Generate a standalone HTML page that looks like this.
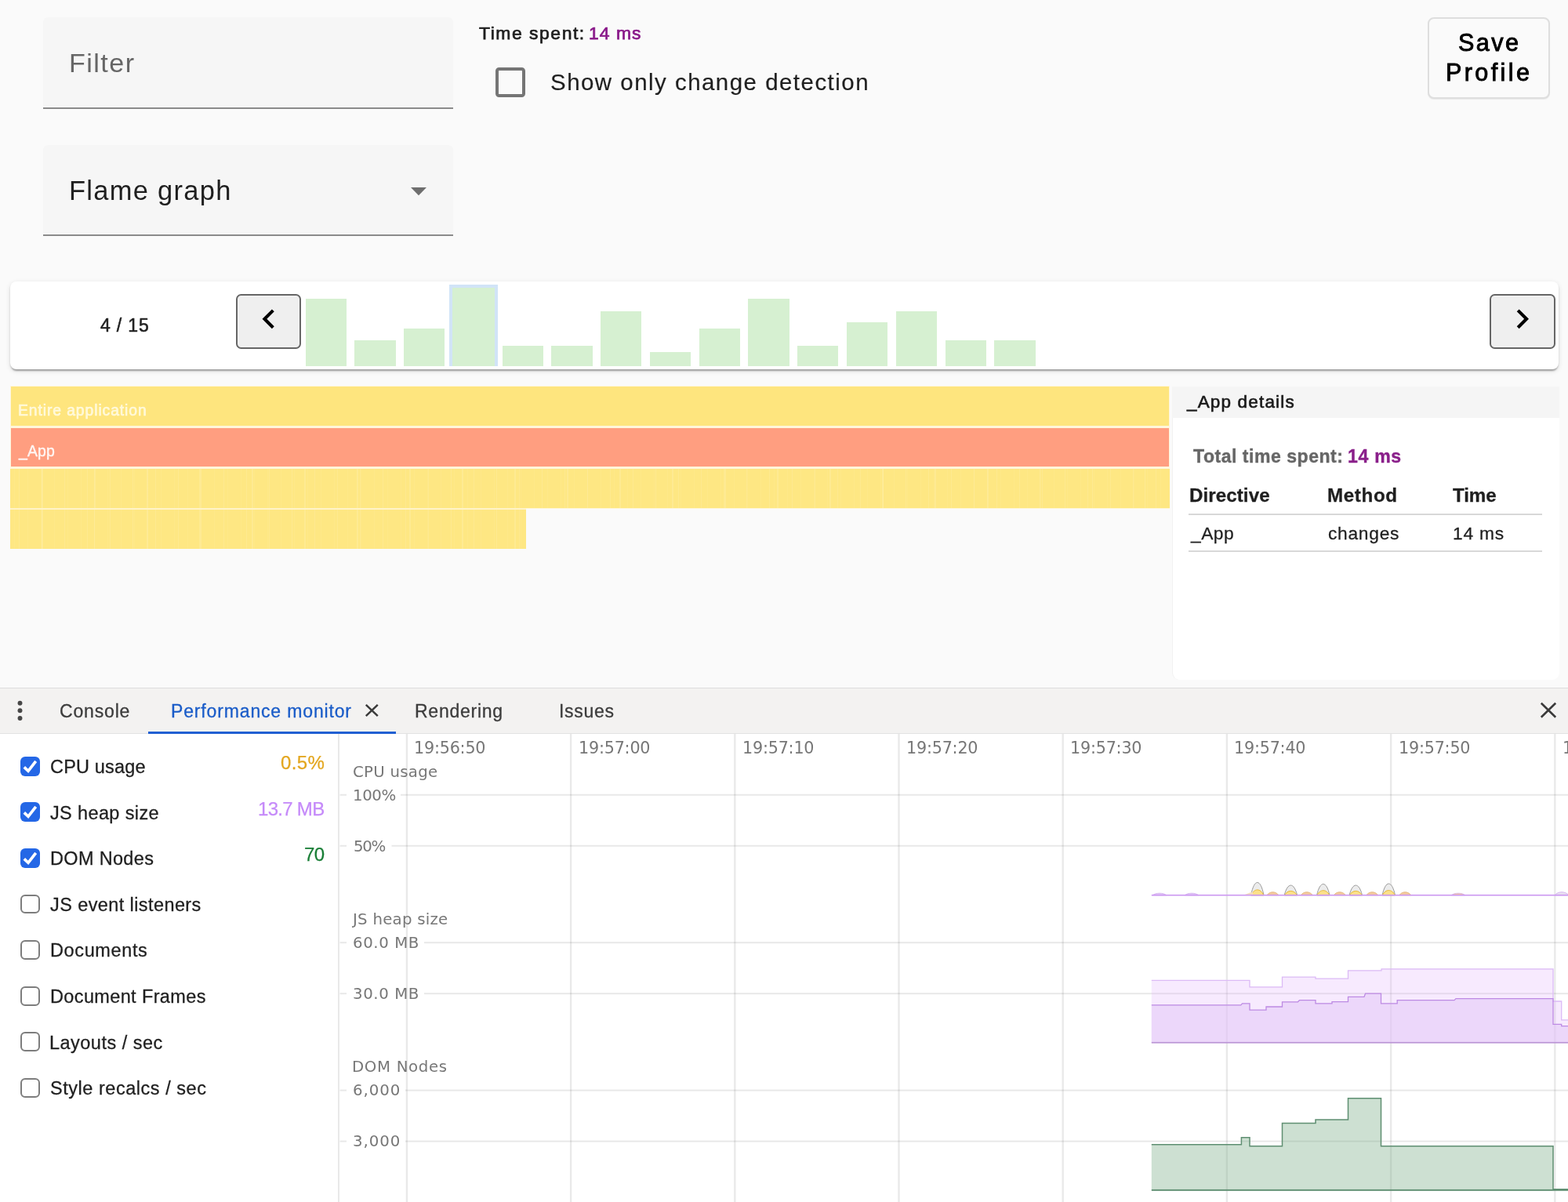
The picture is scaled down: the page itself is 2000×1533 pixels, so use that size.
<!DOCTYPE html>
<html lang="en"><head><meta charset="utf-8"><title>Angular DevTools Profiler</title>
<style>
*{box-sizing:border-box;margin:0;padding:0}
html,body{width:2000px;height:1533px;overflow:hidden;background:#fafafa}
body{position:relative;font-family:"Liberation Sans",sans-serif;-webkit-font-smoothing:antialiased}
.t{position:absolute;white-space:nowrap;will-change:transform}
.a{position:absolute}
.field{background:#f6f6f6;border-radius:6px 6px 0 0;border-bottom:2px solid #8b8b8b}
.card{background:#fff;border-radius:8px;box-shadow:0 4px 2px -2px rgba(0,0,0,.2),0 2px 2px rgba(0,0,0,.14),0 2px 6px rgba(0,0,0,.12)}
.nav{background:#efefef;border:2px solid #666;border-radius:6.5px}
.bar{background:#d6f0d1}
.fy{background:#fee57e}
.fo{background:#ff9e80}
.st{background-color:#fee783;background-image:repeating-linear-gradient(90deg,rgba(255,255,255,0) 0 11px,rgba(255,255,255,.10) 11px 12px,rgba(255,255,255,0) 12px 29px),repeating-linear-gradient(90deg,rgba(255,255,255,0) 0 40px,rgba(255,255,255,.12) 40px 41.5px,rgba(255,255,255,0) 41.5px 67px),repeating-linear-gradient(90deg,rgba(255,255,255,0) 0 5px,rgba(255,255,255,.05) 5px 6px,rgba(255,255,255,0) 6px 17px)}
.cb{border:2px solid #7d7d7d;border-radius:6px;background:#fff}
.cb.on{border:none;background:#2467e6}
svg{position:absolute;overflow:visible}
</style></head><body>

<main class="a" style="left:0;top:0;width:2000px;height:877px">
<div class="a field" style="left:55px;top:22px;width:523px;height:116.5px"></div>
<div class="t" style="left:88.08px;top:58.02px;font-size:34.13px;line-height:44px;letter-spacing:1.447px;color:#666;">Filter</div>
<div class="a field" style="left:55px;top:184.5px;width:523px;height:116.5px"></div>
<div class="t" style="left:88.06px;top:221.00px;font-size:34.49px;line-height:45px;letter-spacing:1.277px;color:#1f1f1f;">Flame graph</div>
<svg style="left:524px;top:239px" width="20" height="10.3" viewBox="0 0 20 10.3"><path d="M0 0h20L10 10.3z" fill="#6e6e6e"/></svg>
<div class="t" style="left:610.84px;top:27.00px;font-size:22.90px;line-height:30px;letter-spacing:1.546px;color:#1f1f1f;-webkit-text-stroke:0.75px currentColor;">Time spent:</div>
<div class="t" style="left:750.97px;top:27.00px;font-size:22.90px;line-height:30px;letter-spacing:1.048px;color:#8a1a8a;-webkit-text-stroke:0.75px currentColor;">14 ms</div>
<div class="a" style="left:632.2px;top:86.3px;width:37.8px;height:37.6px;border:4px solid #757575;border-radius:4.5px"></div>
<div class="t" style="left:702.38px;top:86.00px;font-size:29.44px;line-height:38px;letter-spacing:1.493px;color:#1f1f1f;-webkit-text-stroke:0.2px currentColor;">Show only change detection</div>
<div class="a" style="left:1821px;top:21.7px;width:156px;height:104px;border:2px solid #dedede;border-radius:8px;background:#fafafa;box-shadow:0 1px 1px rgba(0,0,0,.07)"></div>
<div class="t" style="left:1859.54px;top:34.01px;font-size:30.60px;line-height:40px;letter-spacing:2.417px;color:#000;-webkit-text-stroke:0.9px currentColor;">Save</div>
<div class="t" style="left:1843.91px;top:72.01px;font-size:30.60px;line-height:40px;letter-spacing:3.366px;color:#000;-webkit-text-stroke:0.9px currentColor;">Profile</div>
<div class="a card" style="left:13px;top:358.5px;width:1975px;height:112px"></div>
<div class="t" style="left:128.39px;top:400.00px;font-size:23.04px;line-height:30px;letter-spacing:0.830px;color:#1f1f1f;-webkit-text-stroke:0.55px currentColor;">4 / 15</div>
<div class="a nav" style="left:301.2px;top:375.4px;width:82.6px;height:69.2px"></div>
<svg style="left:318px;top:381.5px" width="49.5" height="49.5" viewBox="0 0 24 24"><path d="M15.41 7.41L14 6l-6 6 6 6 1.41-1.41L10.83 12z" fill="#000"/></svg>
<div class="a nav" style="left:1900.2px;top:375.4px;width:83.8px;height:69.2px"></div>
<svg style="left:1917px;top:381.5px" width="49.5" height="49.5" viewBox="0 0 24 24"><path d="M10 6L8.59 7.41 13.17 12l-4.58 4.59L10 18l6-6z" fill="#000"/></svg>
<div class="a bar" style="left:389.50px;top:381.25px;width:52.3px;height:85.50px"></div>
<div class="a bar" style="left:452.27px;top:433.75px;width:52.3px;height:33.00px"></div>
<div class="a bar" style="left:515.04px;top:419.25px;width:52.3px;height:47.50px"></div>
<div class="a" style="left:572.8px;top:362.5px;width:62.4px;height:104.25px;background:#d1e4f7"></div>
<div class="a bar" style="left:576.6px;top:367px;width:54.8px;height:99.75px"></div>
<div class="a bar" style="left:640.58px;top:440.75px;width:52.3px;height:26.00px"></div>
<div class="a bar" style="left:703.35px;top:440.75px;width:52.3px;height:26.00px"></div>
<div class="a bar" style="left:766.12px;top:396.75px;width:52.3px;height:70.00px"></div>
<div class="a bar" style="left:828.89px;top:449.25px;width:52.3px;height:17.50px"></div>
<div class="a bar" style="left:891.66px;top:419.25px;width:52.3px;height:47.50px"></div>
<div class="a bar" style="left:954.43px;top:381.25px;width:52.3px;height:85.50px"></div>
<div class="a bar" style="left:1017.20px;top:440.75px;width:52.3px;height:26.00px"></div>
<div class="a bar" style="left:1079.97px;top:411.25px;width:52.3px;height:55.50px"></div>
<div class="a bar" style="left:1142.74px;top:396.75px;width:52.3px;height:70.00px"></div>
<div class="a bar" style="left:1205.51px;top:433.75px;width:52.3px;height:33.00px"></div>
<div class="a bar" style="left:1268.28px;top:433.75px;width:52.3px;height:33.00px"></div>
<div class="a" style="left:13px;top:492px;width:1479.4px;height:157px;background:#fff6da"></div>
<div class="a" style="left:13px;top:640px;width:658px;height:20px;background:#fff3c8"></div>
<div class="a fy" style="left:14px;top:493.3px;width:1476.8px;height:49.9px"></div>
<div class="a fo" style="left:14px;top:545.9px;width:1476.8px;height:49.3px"></div>
<div class="a fy st" style="left:13px;top:598px;width:1478.6px;height:50px"></div>
<div class="a fy st" style="left:13px;top:649.8px;width:658.3px;height:50.6px"></div>
<div class="t" style="left:22.79px;top:511.00px;font-size:19.34px;line-height:25px;letter-spacing:0.907px;color:rgba(255,253,235,.78);-webkit-text-stroke:0.7px currentColor;">Entire application</div>
<div class="t" style="left:23.90px;top:563.00px;font-size:19.48px;line-height:25px;letter-spacing:0.127px;color:rgba(255,255,255,.88);-webkit-text-stroke:0.4px currentColor;">_App</div>
<div class="a" style="left:1494.5px;top:492.6px;width:494px;height:374px;background:#fff;border-radius:0 0 9px 9px;border-left:1.2px solid #f1f1f1"></div>
<div class="a" style="left:1494.5px;top:492.6px;width:494px;height:40.8px;background:#f5f5f5"></div>
<div class="t" style="left:1514.35px;top:498.01px;font-size:22.47px;line-height:29px;letter-spacing:1.179px;color:#1a1a1a;-webkit-text-stroke:0.65px currentColor;">_App details</div>
<div class="t" style="left:1522.40px;top:567.00px;font-size:23.04px;line-height:30px;letter-spacing:0.524px;color:#666;font-weight:700;-webkit-text-stroke:0.4px currentColor;">Total time spent:</div>
<div class="t" style="left:1719.16px;top:567.00px;font-size:23.04px;line-height:30px;letter-spacing:0.711px;color:#8a1f8a;font-weight:700;-webkit-text-stroke:0.4px currentColor;">14 ms</div>
<div class="t" style="left:1516.99px;top:616.01px;font-size:24.18px;line-height:31px;letter-spacing:0.059px;color:#1f1f1f;font-weight:700;-webkit-text-stroke:0.3px currentColor;">Directive</div>
<div class="t" style="left:1693.49px;top:616.01px;font-size:24.18px;line-height:31px;letter-spacing:0.623px;color:#1f1f1f;font-weight:700;-webkit-text-stroke:0.3px currentColor;">Method</div>
<div class="t" style="left:1853.00px;top:616.01px;font-size:24.18px;line-height:31px;letter-spacing:-0.131px;color:#1f1f1f;font-weight:700;-webkit-text-stroke:0.3px currentColor;">Time</div>
<div class="a" style="left:1516.4px;top:654.5px;width:450.6px;height:2px;background:#d8d8d8"></div>
<div class="t" style="left:1518.86px;top:665.01px;font-size:22.76px;line-height:30px;letter-spacing:0.474px;color:#1f1f1f;-webkit-text-stroke:0.3px currentColor;">_App</div>
<div class="t" style="left:1694.29px;top:665.01px;font-size:22.76px;line-height:30px;letter-spacing:0.731px;color:#1f1f1f;-webkit-text-stroke:0.3px currentColor;">changes</div>
<div class="t" style="left:1853.08px;top:665.01px;font-size:22.76px;line-height:30px;letter-spacing:0.792px;color:#1f1f1f;-webkit-text-stroke:0.3px currentColor;">14 ms</div>
<div class="a" style="left:1516.4px;top:702.2px;width:450.6px;height:2px;background:#d8d8d8"></div>
</main>
<section class="a" style="left:0;top:877px;width:2000px;height:656px;background:#fff">
</section>
<div class="a" style="left:0;top:877px;width:2000px;height:58.5px;background:#f3f2f1;border-top:1.6px solid #dddddd;border-bottom:1.6px solid #e2e2e2"></div>
<svg style="left:20px;top:890px" width="12" height="32" viewBox="0 0 12 32"><circle cx="5.5" cy="6.8" r="2.95" fill="#474747"/><circle cx="5.5" cy="16.3" r="2.95" fill="#474747"/><circle cx="5.5" cy="26" r="2.95" fill="#474747"/></svg>
<div class="t" style="left:75.52px;top:892.00px;font-size:23.04px;line-height:30px;letter-spacing:0.814px;color:#3c3c3c;-webkit-text-stroke:0.3px currentColor;">Console</div>
<div class="t" style="left:218.40px;top:892.00px;font-size:23.04px;line-height:30px;letter-spacing:0.833px;color:#1a5cc8;-webkit-text-stroke:0.3px currentColor;">Performance monitor</div>
<div class="t" style="left:529.20px;top:892.00px;font-size:23.04px;line-height:30px;letter-spacing:0.723px;color:#3c3c3c;-webkit-text-stroke:0.3px currentColor;">Rendering</div>
<div class="t" style="left:713.20px;top:892.00px;font-size:23.04px;line-height:30px;letter-spacing:0.666px;color:#3c3c3c;-webkit-text-stroke:0.3px currentColor;">Issues</div>
<div class="a" style="left:189px;top:932.5px;width:315.6px;height:3.3px;background:#2160d2"></div>
<svg style="left:466px;top:898.4px" width="16.6" height="16" viewBox="0 0 16.6 16"><path d="M0.8 0.8L15.8 15.2M15.8 0.8L0.8 15.2" stroke="#3a3a3a" stroke-width="2.5" fill="none"/></svg>
<svg style="left:1964.8px;top:895.7px" width="20" height="19.5" viewBox="0 0 20 19.5"><path d="M0.8 0.8L19.2 18.7M19.2 0.8L0.8 18.7" stroke="#3a3a3a" stroke-width="2.6" fill="none"/></svg>
<div class="a cb on" style="left:25.8px;top:964.90px;width:24.8px;height:24.8px"></div>
<svg style="left:25.8px;top:964.90px" width="24.8" height="24.8" viewBox="0 0 24.8 24.8"><path d="M4.8 13.4L10 18.3L19.7 5.8" stroke="#fff" stroke-width="3.7" fill="none"/></svg>
<div class="t" style="left:63.60px;top:963.01px;font-size:23.47px;line-height:31px;letter-spacing:0.200px;color:#1f1f1f;-webkit-text-stroke:0.3px currentColor;">CPU usage</div>
<div class="t" style="left:358.40px;top:957.02px;font-size:24.04px;line-height:31px;letter-spacing:0.378px;color:#e3a61e;-webkit-text-stroke:0.25px currentColor;">0.5%</div>
<div class="a cb on" style="left:25.8px;top:1023.48px;width:24.8px;height:24.8px"></div>
<svg style="left:25.8px;top:1023.48px" width="24.8" height="24.8" viewBox="0 0 24.8 24.8"><path d="M4.8 13.4L10 18.3L19.7 5.8" stroke="#fff" stroke-width="3.7" fill="none"/></svg>
<div class="t" style="left:63.63px;top:1022.01px;font-size:23.47px;line-height:31px;letter-spacing:0.382px;color:#1f1f1f;-webkit-text-stroke:0.3px currentColor;">JS heap size</div>
<div class="t" style="left:329.40px;top:1016.02px;font-size:24.04px;line-height:31px;letter-spacing:-0.717px;color:#c58af9;-webkit-text-stroke:0.25px currentColor;">13.7 MB</div>
<div class="a cb on" style="left:25.8px;top:1082.06px;width:24.8px;height:24.8px"></div>
<svg style="left:25.8px;top:1082.06px" width="24.8" height="24.8" viewBox="0 0 24.8 24.8"><path d="M4.8 13.4L10 18.3L19.7 5.8" stroke="#fff" stroke-width="3.7" fill="none"/></svg>
<div class="t" style="left:63.57px;top:1080.01px;font-size:23.47px;line-height:31px;letter-spacing:0.346px;color:#1f1f1f;-webkit-text-stroke:0.3px currentColor;">DOM Nodes</div>
<div class="t" style="left:388.17px;top:1074.02px;font-size:24.04px;line-height:31px;letter-spacing:-0.710px;color:#1a7f37;-webkit-text-stroke:0.25px currentColor;">70</div>
<div class="a cb" style="left:25.8px;top:1140.64px;width:24.8px;height:24.8px"></div>
<div class="t" style="left:63.63px;top:1139.01px;font-size:23.47px;line-height:31px;letter-spacing:0.417px;color:#1f1f1f;-webkit-text-stroke:0.3px currentColor;">JS event listeners</div>
<div class="a cb" style="left:25.8px;top:1199.22px;width:24.8px;height:24.8px"></div>
<div class="t" style="left:63.57px;top:1197.01px;font-size:23.47px;line-height:31px;letter-spacing:0.635px;color:#1f1f1f;-webkit-text-stroke:0.3px currentColor;">Documents</div>
<div class="a cb" style="left:25.8px;top:1257.80px;width:24.8px;height:24.8px"></div>
<div class="t" style="left:63.57px;top:1256.01px;font-size:23.47px;line-height:31px;letter-spacing:0.383px;color:#1f1f1f;-webkit-text-stroke:0.3px currentColor;">Document Frames</div>
<div class="a cb" style="left:25.8px;top:1316.38px;width:24.8px;height:24.8px"></div>
<div class="t" style="left:63.47px;top:1315.01px;font-size:23.47px;line-height:31px;letter-spacing:0.494px;color:#1f1f1f;-webkit-text-stroke:0.3px currentColor;">Layouts / sec</div>
<div class="a cb" style="left:25.8px;top:1374.96px;width:24.8px;height:24.8px"></div>
<div class="t" style="left:63.97px;top:1373.01px;font-size:23.47px;line-height:31px;letter-spacing:0.545px;color:#1f1f1f;-webkit-text-stroke:0.3px currentColor;">Style recalcs / sec</div>
<div class="a" style="left:431.2px;top:936px;width:2.2px;height:597px;background:#e9e9e9"></div>
<svg style="left:0;top:0" width="2000" height="1533" viewBox="0 0 2000 1533">
<rect x="517.70" y="936" width="2.4" height="597" fill="rgba(0,0,0,.085)"/>
<rect x="726.90" y="936" width="2.4" height="597" fill="rgba(0,0,0,.085)"/>
<rect x="936.10" y="936" width="2.4" height="597" fill="rgba(0,0,0,.085)"/>
<rect x="1145.30" y="936" width="2.4" height="597" fill="rgba(0,0,0,.085)"/>
<rect x="1354.50" y="936" width="2.4" height="597" fill="rgba(0,0,0,.085)"/>
<rect x="1563.70" y="936" width="2.4" height="597" fill="rgba(0,0,0,.085)"/>
<rect x="1772.90" y="936" width="2.4" height="597" fill="rgba(0,0,0,.085)"/>
<rect x="1982.10" y="936" width="2.4" height="597" fill="rgba(0,0,0,.085)"/>
<rect x="511" y="1012.75" width="1489" height="2" fill="rgba(0,0,0,.09)"/>
<rect x="433.5" y="1012.75" width="8.5" height="2" fill="rgba(0,0,0,.09)"/>
<rect x="499.5" y="1077.75" width="1500.5" height="2" fill="rgba(0,0,0,.09)"/>
<rect x="433.5" y="1077.75" width="8.5" height="2" fill="rgba(0,0,0,.09)"/>
<rect x="541" y="1201.20" width="1459" height="2" fill="rgba(0,0,0,.09)"/>
<rect x="433.5" y="1201.20" width="8.5" height="2" fill="rgba(0,0,0,.09)"/>
<rect x="541" y="1266.20" width="1459" height="2" fill="rgba(0,0,0,.09)"/>
<rect x="433.5" y="1266.20" width="8.5" height="2" fill="rgba(0,0,0,.09)"/>
<rect x="517" y="1389.60" width="1483" height="2" fill="rgba(0,0,0,.09)"/>
<rect x="433.5" y="1389.60" width="8.5" height="2" fill="rgba(0,0,0,.09)"/>
<rect x="517" y="1454.60" width="1483" height="2" fill="rgba(0,0,0,.09)"/>
<rect x="433.5" y="1454.60" width="8.5" height="2" fill="rgba(0,0,0,.09)"/>
<path d="M1595.6 1141.7C1599.7 1120.1 1607.9 1120.1 1612.0 1141.7Z" fill="#ececec" stroke="#9a9a9a" stroke-width="1"/>
<path d="M1595.8 1141.7C1599.8 1132.6 1607.8 1132.6 1611.8 1141.7Z" fill="#fbe08a" stroke="#e6b93a" stroke-width="1"/>
<path d="M1638.2 1141.7C1642.3 1124.9 1650.5 1124.9 1654.6 1141.7Z" fill="#ececec" stroke="#9a9a9a" stroke-width="1"/>
<path d="M1638.4 1141.7C1642.4 1134.6 1650.4 1134.6 1654.4 1141.7Z" fill="#fbe08a" stroke="#e6b93a" stroke-width="1"/>
<path d="M1679.6 1141.7C1683.7 1122.8 1691.9 1122.8 1696.0 1141.7Z" fill="#ececec" stroke="#9a9a9a" stroke-width="1"/>
<path d="M1679.8 1141.7C1683.8 1133.7 1691.8 1133.7 1695.8 1141.7Z" fill="#fbe08a" stroke="#e6b93a" stroke-width="1"/>
<path d="M1721.1 1141.7C1725.2 1124.9 1733.4 1124.9 1737.5 1141.7Z" fill="#ececec" stroke="#9a9a9a" stroke-width="1"/>
<path d="M1721.3 1141.7C1725.3 1134.6 1733.3 1134.6 1737.3 1141.7Z" fill="#fbe08a" stroke="#e6b93a" stroke-width="1"/>
<path d="M1763.1 1141.7C1767.2 1122.2 1775.4 1122.2 1779.5 1141.7Z" fill="#ececec" stroke="#9a9a9a" stroke-width="1"/>
<path d="M1763.3 1141.7C1767.3 1133.5 1775.3 1133.5 1779.3 1141.7Z" fill="#fbe08a" stroke="#e6b93a" stroke-width="1"/>
<path d="M1615.9 1141.7C1619.7 1136.4 1627.2 1136.4 1630.9 1141.7Z" fill="#f3c9a0" stroke="#e0b070" stroke-width="0.8"/>
<path d="M1659.3 1141.7C1663.0 1136.4 1670.5 1136.4 1674.3 1141.7Z" fill="#f3c9a0" stroke="#e0b070" stroke-width="0.8"/>
<path d="M1701.3 1141.7C1705.0 1136.4 1712.5 1136.4 1716.3 1141.7Z" fill="#f3c9a0" stroke="#e0b070" stroke-width="0.8"/>
<path d="M1742.8 1141.7C1746.5 1136.4 1754.0 1136.4 1757.8 1141.7Z" fill="#f3c9a0" stroke="#e0b070" stroke-width="0.8"/>
<path d="M1784.8 1141.7C1788.5 1136.4 1796.0 1136.4 1799.8 1141.7Z" fill="#f3c9a0" stroke="#e0b070" stroke-width="0.8"/>
<path d="M1470.0 1141.7C1474.5 1138.4 1483.5 1138.4 1488.0 1141.7Z" fill="#e3c9f7" stroke="#cfa8ee" stroke-width="0.8"/>
<path d="M1511.0 1141.7C1515.5 1138.4 1524.5 1138.4 1529.0 1141.7Z" fill="#e3c9f7" stroke="#cfa8ee" stroke-width="0.8"/>
<path d="M1851.0 1141.7C1855.5 1138.4 1864.5 1138.4 1869.0 1141.7Z" fill="#f3c9a0" stroke="#cfa8ee" stroke-width="0.8"/>
<path d="M1983.0 1141.7C1987.5 1136.4 1996.5 1136.4 2001.0 1141.7Z" fill="#e8e0f0" stroke="#cfa8ee" stroke-width="0.8"/>
<path d="M1583 1141.7C1590 1141.7 1592 1138.4 1598 1137.6L1598 1141.7Z" fill="#f3dcc0"/>
<rect x="1468.8" y="1140.9" width="531.2" height="1.6" fill="#cc98f1"/>
<path d="M1468.8 1250.4 L1594.0 1250.4 L1594.0 1258.8 L1635.5 1258.8 L1635.5 1246.2 L1678.0 1246.2 L1678.0 1248.2 L1719.5 1248.2 L1719.5 1237.8 L1762.0 1237.8 L1762.0 1235.8 L1981.0 1235.8 L1981.0 1277.0 L1991.7 1277.0 L1991.7 1300.8 L2001.0 1300.8 L2001.0 1329.7 L1468.8 1329.7Z" fill="rgba(222,170,250,.25)"/><path d="M1468.8 1250.4 L1594.0 1250.4 L1594.0 1258.8 L1635.5 1258.8 L1635.5 1246.2 L1678.0 1246.2 L1678.0 1248.2 L1719.5 1248.2 L1719.5 1237.8 L1762.0 1237.8 L1762.0 1235.8 L1981.0 1235.8 L1981.0 1277.0 L1991.7 1277.0 L1991.7 1300.8 L2001.0 1300.8" fill="none" stroke="#dcbaf6" stroke-width="1.3"/>
<path d="M1468.8 1281.8 L1582.8 1281.8 L1584.5 1279.8 L1594.0 1279.8 L1594.0 1288.2 L1615.0 1288.2 L1615.0 1284.0 L1635.5 1284.0 L1635.5 1277.8 L1655.5 1277.8 L1657.5 1275.6 L1678.0 1275.6 L1678.0 1279.8 L1699.0 1279.8 L1699.0 1277.6 L1719.5 1277.6 L1719.5 1271.4 L1740.0 1271.4 L1741.5 1267.2 L1761.5 1267.2 L1761.5 1279.8 L1782.2 1279.8 L1782.2 1275.6 L1855.0 1275.6 L1857.0 1273.6 L1981.0 1273.6 L1981.0 1306.4 L1991.7 1306.4 L1991.7 1308.7 L2001.0 1308.7 L2001.0 1329.7 L1468.8 1329.7Z" fill="rgba(225,198,248,.5)"/><path d="M1468.8 1281.8 L1582.8 1281.8 L1584.5 1279.8 L1594.0 1279.8 L1594.0 1288.2 L1615.0 1288.2 L1615.0 1284.0 L1635.5 1284.0 L1635.5 1277.8 L1655.5 1277.8 L1657.5 1275.6 L1678.0 1275.6 L1678.0 1279.8 L1699.0 1279.8 L1699.0 1277.6 L1719.5 1277.6 L1719.5 1271.4 L1740.0 1271.4 L1741.5 1267.2 L1761.5 1267.2 L1761.5 1279.8 L1782.2 1279.8 L1782.2 1275.6 L1855.0 1275.6 L1857.0 1273.6 L1981.0 1273.6 L1981.0 1306.4 L1991.7 1306.4 L1991.7 1308.7 L2001.0 1308.7" fill="none" stroke="#bd8ae4" stroke-width="1.3"/>
<rect x="1468.8" y="1328.9" width="531.2" height="1.7" fill="#bb95d6"/>
<path d="M1468.8 1459.8 L1583.4 1459.8 L1583.4 1450.8 L1594.0 1450.8 L1594.0 1461.8 L1635.5 1461.8 L1635.5 1432.4 L1678.0 1432.4 L1678.0 1427.9 L1719.5 1427.9 L1719.5 1400.7 L1761.5 1400.7 L1761.5 1461.8 L1981.0 1461.8 L1981.0 1516.7 L2001.0 1516.7 L2001.0 1517.8 L1468.8 1517.8Z" fill="rgba(100,160,115,.32)"/><path d="M1468.8 1459.8 L1583.4 1459.8 L1583.4 1450.8 L1594.0 1450.8 L1594.0 1461.8 L1635.5 1461.8 L1635.5 1432.4 L1678.0 1432.4 L1678.0 1427.9 L1719.5 1427.9 L1719.5 1400.7 L1761.5 1400.7 L1761.5 1461.8 L1981.0 1461.8 L1981.0 1516.7 L2001.0 1516.7" fill="none" stroke="#5f8f72" stroke-width="1.5"/>
<rect x="1468.8" y="1516.9" width="531.2" height="1.9" fill="#5f8f72"/>
</svg>
<div class="t" style="left:528.44px;top:941.01px;font-size:20.70px;line-height:27px;letter-spacing:-0.199px;color:#777;font-family:'DejaVu Sans',sans-serif;">19:56:50</div>
<div class="t" style="left:737.64px;top:941.01px;font-size:20.70px;line-height:27px;letter-spacing:-0.199px;color:#777;font-family:'DejaVu Sans',sans-serif;">19:57:00</div>
<div class="t" style="left:946.84px;top:941.01px;font-size:20.70px;line-height:27px;letter-spacing:-0.199px;color:#777;font-family:'DejaVu Sans',sans-serif;">19:57:10</div>
<div class="t" style="left:1156.04px;top:941.01px;font-size:20.70px;line-height:27px;letter-spacing:-0.199px;color:#777;font-family:'DejaVu Sans',sans-serif;">19:57:20</div>
<div class="t" style="left:1365.24px;top:941.01px;font-size:20.70px;line-height:27px;letter-spacing:-0.199px;color:#777;font-family:'DejaVu Sans',sans-serif;">19:57:30</div>
<div class="t" style="left:1574.44px;top:941.01px;font-size:20.70px;line-height:27px;letter-spacing:-0.199px;color:#777;font-family:'DejaVu Sans',sans-serif;">19:57:40</div>
<div class="t" style="left:1783.64px;top:941.01px;font-size:20.70px;line-height:27px;letter-spacing:-0.199px;color:#777;font-family:'DejaVu Sans',sans-serif;">19:57:50</div>
<div class="t" style="left:1992.84px;top:941.01px;font-size:20.70px;line-height:27px;letter-spacing:-0.199px;color:#777;font-family:'DejaVu Sans',sans-serif;">19:58:00</div>
<div class="t" style="left:449.57px;top:972.01px;font-size:19.74px;line-height:26px;letter-spacing:0.277px;color:#777;font-family:'DejaVu Sans',sans-serif;">CPU usage</div>
<div class="t" style="left:449.84px;top:1002.01px;font-size:19.74px;line-height:26px;letter-spacing:-0.390px;color:#777;font-family:'DejaVu Sans',sans-serif;">100%</div>
<div class="t" style="left:450.77px;top:1067.01px;font-size:19.74px;line-height:26px;letter-spacing:-1.267px;color:#777;font-family:'DejaVu Sans',sans-serif;">50%</div>
<div class="t" style="left:450.23px;top:1160.01px;font-size:19.74px;line-height:26px;letter-spacing:0.256px;color:#777;font-family:'DejaVu Sans',sans-serif;">JS heap size</div>
<div class="t" style="left:449.77px;top:1190.01px;font-size:19.74px;line-height:26px;letter-spacing:0.603px;color:#777;font-family:'DejaVu Sans',sans-serif;">60.0 MB</div>
<div class="t" style="left:449.77px;top:1255.01px;font-size:19.74px;line-height:26px;letter-spacing:0.603px;color:#777;font-family:'DejaVu Sans',sans-serif;">30.0 MB</div>
<div class="t" style="left:449.15px;top:1348.01px;font-size:19.74px;line-height:26px;letter-spacing:0.650px;color:#777;font-family:'DejaVu Sans',sans-serif;">DOM Nodes</div>
<div class="t" style="left:449.77px;top:1378.01px;font-size:19.74px;line-height:26px;letter-spacing:0.964px;color:#777;font-family:'DejaVu Sans',sans-serif;">6,000</div>
<div class="t" style="left:449.77px;top:1443.01px;font-size:19.74px;line-height:26px;letter-spacing:0.964px;color:#777;font-family:'DejaVu Sans',sans-serif;">3,000</div>
</body></html>
